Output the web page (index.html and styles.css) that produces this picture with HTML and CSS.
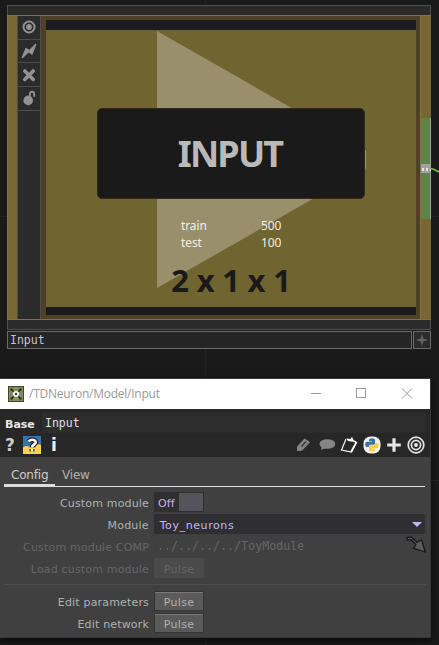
FILE: index.html
```html
<!DOCTYPE html>
<html lang="en">
<head>
<meta charset="utf-8">
<title>/TDNeuron/Model/Input</title>
<link rel="stylesheet" href="styles.css">
</head>
<body>
<main class="canvas">
  <section class="node">
    <div class="node-bar top"></div>
    <div class="node-body">
      <div class="strip"></div>
      <div class="flags">
        <div class="flag"><svg width="14" height="14" viewBox="0 0 14 14"><circle cx="7" cy="7" r="5.5" fill="none" stroke="#929292" stroke-width="2"/><circle cx="7" cy="7" r="2.9" fill="#929292"/></svg></div>
        <div class="flag"><svg width="16" height="16" viewBox="0 0 16 16"><path d="M1 15 5 5.5 8.5 7.5 15 1 11 11 7.5 8.7Z" fill="#929292" stroke="#929292" stroke-width="1.2"/></svg></div>
        <div class="flag"><svg width="14" height="14" viewBox="0 0 14 14"><path d="M2.8 3 11.2 11.4M11.2 3 2.8 11.4" stroke="#929292" stroke-width="3.6" stroke-linecap="round"/></svg></div>
        <div class="flag"><svg width="14" height="16" viewBox="0 0 14 16"><circle cx="6.2" cy="10.4" r="4.8" fill="#929292"/><path d="M7.8 6V4.2C7.8 1 12.2 1 12.2 4.2V6.8" fill="none" stroke="#929292" stroke-width="1.9"/></svg></div>
      </div>
      <div class="viewer">
        <svg class="triangle" width="209" height="257" viewBox="0 0 209 257"><path d="M0 0 209 119.4V137.6L0 257Z" fill="#99906b"/></svg>
        <div class="plate">INPUT</div>
        <dl class="stats"><dt>train</dt><dd>500</dd><dt>test</dt><dd>100</dd></dl>
        <div class="shape">2 x 1 x 1</div>
      </div>
      <div class="strip right"><div class="connector"><svg width="10" height="9" viewBox="0 0 10 9"><path d="M0 0H10V9H0Z" fill="#a39fa3"/><path d="M1 4H3V7H1ZM5 4H7V7H5ZM9 4H10V7H9Z" fill="#e2e2e2"/></svg></div></div>
    </div>
    <div class="node-bar bottom"></div>
    <div class="node-name">
      <div class="name-field">Input</div>
      <div class="star"><svg width="12" height="12" viewBox="0 0 12 12"><path d="M6 0 7.4 4.6 12 6 7.4 7.4 6 12 4.6 7.4 0 6 4.6 4.6Z" fill="#626262"/></svg></div>
    </div>
  </section>
  <svg class="wire" width="9" height="8" viewBox="0 0 9 8"><path d="M0 1.5C3 1.5 5 3 9 5" fill="none" stroke="#72c83c" stroke-width="1.6"/></svg>

  <section class="window">
    <header class="titlebar">
      <svg class="app-icon" width="16" height="16" viewBox="0 0 16 16"><rect width="16" height="16" fill="#3e4430"/><rect x="1" y="1" width="14" height="14" fill="#7f9060"/><path d="M3 3 13 13M13 3 3 13" stroke="#1c2018" stroke-width="1.3"/><path d="M2.5 2.5H4.5V4.5H2.5ZM11.5 2.5H13.5V4.5H11.5ZM2.5 11.5H4.5V13.5H2.5ZM11.5 11.5H13.5V13.5H11.5Z" fill="#22261d"/><circle cx="8" cy="8" r="3" fill="#fff"/><circle cx="8" cy="8" r="1.2" fill="#30362a"/></svg>
      <span class="title">/TDNeuron/Model/Input</span>
      <svg class="controls" width="102" height="11" viewBox="0 0 102 11"><path d="M0 5.5H10" stroke="#999"/><rect x="45.5" y=".5" width="9" height="9" fill="none" stroke="#999"/><path d="M91 .5 101 10.5M101 .5 91 10.5" stroke="#999"/></svg>
    </header>
    <div class="head">
      <div class="op-row"><b class="op-type">Base</b><div class="op-name">Input</div></div>
      <div class="tools">
        <span class="help">?</span>
        <svg class="pyhelp" width="18" height="18" viewBox="0 0 18 18"><path d="M0 0H18V18H0Z" fill="#3874a5"/><path d="M0 18V11.5Q2 9 6 10.5Q13 11 13.5 8.8Q15 7.5 18 9V18Z" fill="#ffd34e"/><path d="M5.6 5.2Q9 2.8 11.6 4.4T11 8.6Q9 9.8 9 11.6M9 13V15.6" fill="none" stroke="#222" stroke-width="5"/><path d="M5.6 5.2Q9 2.8 11.6 4.4T11 8.6Q9 9.8 9 11.6M9 13V15.6" fill="none" stroke="#fff" stroke-width="2.6"/></svg>
        <span class="info">i</span>
        <div class="actions">
          <svg width="18" height="18" viewBox="0 0 18 18"><path d="M3 15V10.5L10.5 2.5 16 6.2 8 14.8Z" fill="#858585"/><path d="M7.5 10.5 12 5.6" stroke="#333" stroke-width="1.4"/></svg>
          <svg width="18" height="18" viewBox="0 0 18 18"><ellipse cx="10.4" cy="8" rx="8" ry="4.8" fill="#858585"/><path d="M5 10 4 14 9 12" fill="#858585"/></svg>
          <svg width="18" height="18" viewBox="0 0 18 18"><path d="M6 3 1.5 14 11.5 16 16.5 6.5 14 5" fill="none" stroke="#f4f4f4" stroke-width="1.2"/><path d="M12 16 17 6.5 14.5 4.5 15 7 10.5 15Z" fill="#fff"/><path d="M6.5 2.5 10.5 3 12 .8 13 3 15 6 8 5Z" fill="#fff"/></svg>
          <svg width="18" height="18" viewBox="0 0 18 18"><rect x=".5" y=".5" width="17" height="17" rx="7" fill="#f3f1ec"/><path d="M6 5.2V4Q6 2.3 9 2.3T12 4V7.2Q12 8.8 10.3 8.8H7.7Q5.8 8.8 5.8 11H4.2Q2.2 11 2.2 8.2T4.2 5.8H9V5.2Z" fill="#3874a5"/><path d="M12 12.8V14Q12 15.7 9 15.7T6 14V11Q6 9.4 7.7 9.4H10.3Q12.4 9.4 12.4 7H13.8Q15.8 7 15.8 9.8T13.8 12.2H9V12.8Z" fill="#ffcf3f"/></svg>
          <svg width="16" height="18" viewBox="0 0 16 18"><path d="M8 2.2V15.8M1.2 9H14.8" stroke="#e5e5e5" stroke-width="3.2"/></svg>
          <svg width="18" height="18" viewBox="0 0 18 18"><g fill="none" stroke="#e5e5e5" stroke-width="1.7"><circle cx="9" cy="9" r="7.8"/><circle cx="9" cy="9" r="4.6"/></g><circle cx="9" cy="9" r="2" fill="#e5e5e5"/></svg>
        </div>
      </div>
    </div>
    <div class="params">
      <nav class="tabs"><span class="tab active">Config</span><span class="tab">View</span></nav>
      <div class="row"><label>Custom module</label><div class="toggle"><span>Off</span><i></i></div></div>
      <div class="row"><label>Module</label><div class="select"><span>Toy_neurons</span><i></i></div></div>
      <div class="row disabled"><label>Custom module COMP</label><div class="path">../../../../ToyModule</div><svg class="pick" width="20" height="18" viewBox="0 0 20 18"><path d="M.7 1.7 5 .8 11 6.2 15.5 3.8 19.3 16 7.5 12.3 10 8.5 5 3.7 1.5 4Z" fill="#5a5a5a" stroke="#141414" stroke-width="1.2"/></svg></div>
      <div class="row disabled"><label>Load custom module</label><button>Pulse</button></div>
      <hr>
      <div class="row"><label>Edit parameters</label><button>Pulse</button></div>
      <div class="row"><label>Edit network</label><button>Pulse</button></div>
    </div>
  </section>
</main>
</body>
</html>
```
FILE: styles.css
```css
* { box-sizing: border-box; }
body { margin: 0; font-family: "DejaVu Sans", sans-serif; }
svg { display: block; flex: none; }

.canvas {
  position: relative;
  width: 439px;
  height: 645px;
  overflow: hidden;
  background:
    linear-gradient(#232323, #232323) 205px 0 / 1px 100% no-repeat,
    linear-gradient(#232323, #232323) 0 216px / 100% 1px no-repeat,
    linear-gradient(#232323, #232323) 0 480px / 100% 1px no-repeat,
    #1a1a1a;
}

/* Network node */
.node { position: absolute; left: 7px; top: 5px; width: 424px; }
.node-bar { height: 10px; background: #2b2b2b; border: 1px solid #505050; border-bottom: 0; }
.node-bar.bottom { border: 1px solid #505050; border-top: 0; }
.node-body {
  display: flex;
  height: 305px;
  background: #4d4227;
  border-top: 1px solid #86713f;
  border-bottom: 1px solid #86713f;
}
.strip { width: 10px; background: #786733; border-left: 1px solid #86713f; }
.strip.right { width: 11px; margin-left: 4px; padding-top: 102px; }
.connector {
  height: 101px;
  padding-top: 46px;
  background: #5c8446;
  border-right: 1px solid #a0a0a0;
}
.flags { width: 24px; background: #2b2b2b; border: solid #4d4d4d; border-width: 0 1px; }
.flag {
  display: flex;
  align-items: center;
  justify-content: center;
  height: 23.7px;
  border-bottom: 1px solid #4d4d4d;
}
.viewer {
  position: relative;
  width: 370px;
  height: 295px;
  margin: 4px 0 0 5px;
  padding-top: 78px;
  border-top: 10px solid #1b1c1e;
  border-bottom: 8px solid #1b1c1e;
  background: #706430;
}
.triangle { position: absolute; left: 111px; top: 1px; }
.plate, .stats, .shape { position: relative; }
.plate {
  width: 268px;
  height: 91px;
  margin-left: 51px;
  padding-right: 2px;
  border: 1px solid #302b1c;
  border-radius: 5px;
  background: #1a1a1a;
  color: #bababa;
  font: bold 36px/90px "Noto Sans", sans-serif;
  letter-spacing: -1.8px;
  text-align: center;
}
.stats {
  display: grid;
  grid-template-columns: 80px auto;
  width: 110px;
  margin: 18px 0 0 135px;
  color: #f0eee8;
  font: 12px/17px "Noto Sans", sans-serif;
  letter-spacing: -.1px;
}
.stats dd { margin: 0; }
.shape {
  margin-top: 8px;
  color: #1a1a1a;
  font: bold 31px/42px "Noto Sans", sans-serif;
  letter-spacing: -.2px;
  text-align: center;
}
.node-name { display: flex; gap: 1px; margin-top: 1px; font: 11.5px/16px "DejaVu Sans Mono", monospace; }
.name-field { width: 405px; height: 18px; padding-left: 2px; border: 1px solid #6c6c6c; background: #252525; color: #c4c4c4; }
.star { display: flex; align-items: center; justify-content: center; width: 18px; height: 18px; border: 1px solid #6c6c6c; background: #2b2b2b; }
.wire { position: absolute; left: 430px; top: 167px; }

/* Parameter window */
.window {
  position: absolute;
  left: 0;
  top: 378px;
  width: 431px;
  height: 260px;
  border: solid #363636;
  border-width: 1px 1px 1px 0;
  background: #404040;
  box-shadow: 0 3px 8px #0009;
}
.titlebar { display: flex; align-items: center; height: 30px; padding: 0 17px 0 8px; background: #fff; }
.title { margin-left: 5px; color: #999; font: 12px/28px "Open Sans", sans-serif; letter-spacing: -.25px; }
.controls { position: relative; top: -1px; margin-left: auto; }
.head { height: 48px; padding-top: 4px; background: #272727; }
.op-row { display: flex; height: 20px; }
.op-type { width: 42px; padding-left: 5px; color: #e8e8e8; font-size: 11px; line-height: 23px; }
.op-name { width: 384px; padding-left: 3px; background: #2d2d2d; color: #e0e0e0; font: 11.5px/20px "DejaVu Sans Mono", monospace; }
.tools { display: flex; align-items: center; height: 24px; font-weight: bold; font-size: 17px; line-height: 20px; color: #f0f0f0; }
.help { width: 23px; padding-left: 5px; color: #ccc; }
.info { margin-left: 10px; }
.actions { display: flex; gap: 5px; margin: 0 5px 0 auto; }

.params { color: #b0b0b0; font-size: 11px; line-height: 23px; letter-spacing: .17px; }
.tabs { display: flex; height: 30px; margin: 0 5px 0 4px; padding-top: 7px; border-bottom: 1px solid #ddd; font-size: 12px; line-height: 22px; letter-spacing: -.2px; }
.tab { height: 22px; padding: 0 7px; }
.tab.active { width: 51px; height: 23px; border-bottom: 3px solid #ddd; color: #ccc; }
.row { display: flex; height: 20px; margin: 0 5px 2px 0; }
.tabs + .row { margin-top: 5px; }
.row label { width: 154px; padding-right: 5px; text-align: right; white-space: nowrap; }
.row button {
  width: 50px;
  height: 20px;
  padding: 2px 0 0;
  border: 1px solid #343434;
  background: #5a5a5a;
  box-shadow: inset 0 1px #777;
  color: #b0b0b0;
  font: 11px/18px "DejaVu Sans", sans-serif;
  letter-spacing: .3px;
}
.disabled { color: #666; }
.row.disabled button { border-color: #4a4a4a; background: #4a4a4a; box-shadow: none; color: #666; }
.toggle { display: flex; width: 50px; padding: 1px 1px 1px 0; background: #2f2f31; color: #c5b3ff; line-height: 21px; }
.toggle span { width: 25px; padding-left: 4px; }
.toggle i { width: 24px; background: #55545b; }
.select { display: flex; justify-content: space-between; width: 272px; padding: 0 3px 0 6px; background: #2f2f31; color: #c5b3ff; letter-spacing: .6px; }
.select i { height: 5px; margin-top: 8px; border: 5px solid transparent; border-top-color: #c5b3ff; border-bottom: 0; }
.path { padding-left: 3px; font: 11.6px/20px "DejaVu Sans Mono", monospace; letter-spacing: .03px; }
.pick { margin-right: -1px; margin-left: auto; }
hr { height: 1px; margin: 6px 4px 6px; border: 0; background: #4d4d4d; }
```
